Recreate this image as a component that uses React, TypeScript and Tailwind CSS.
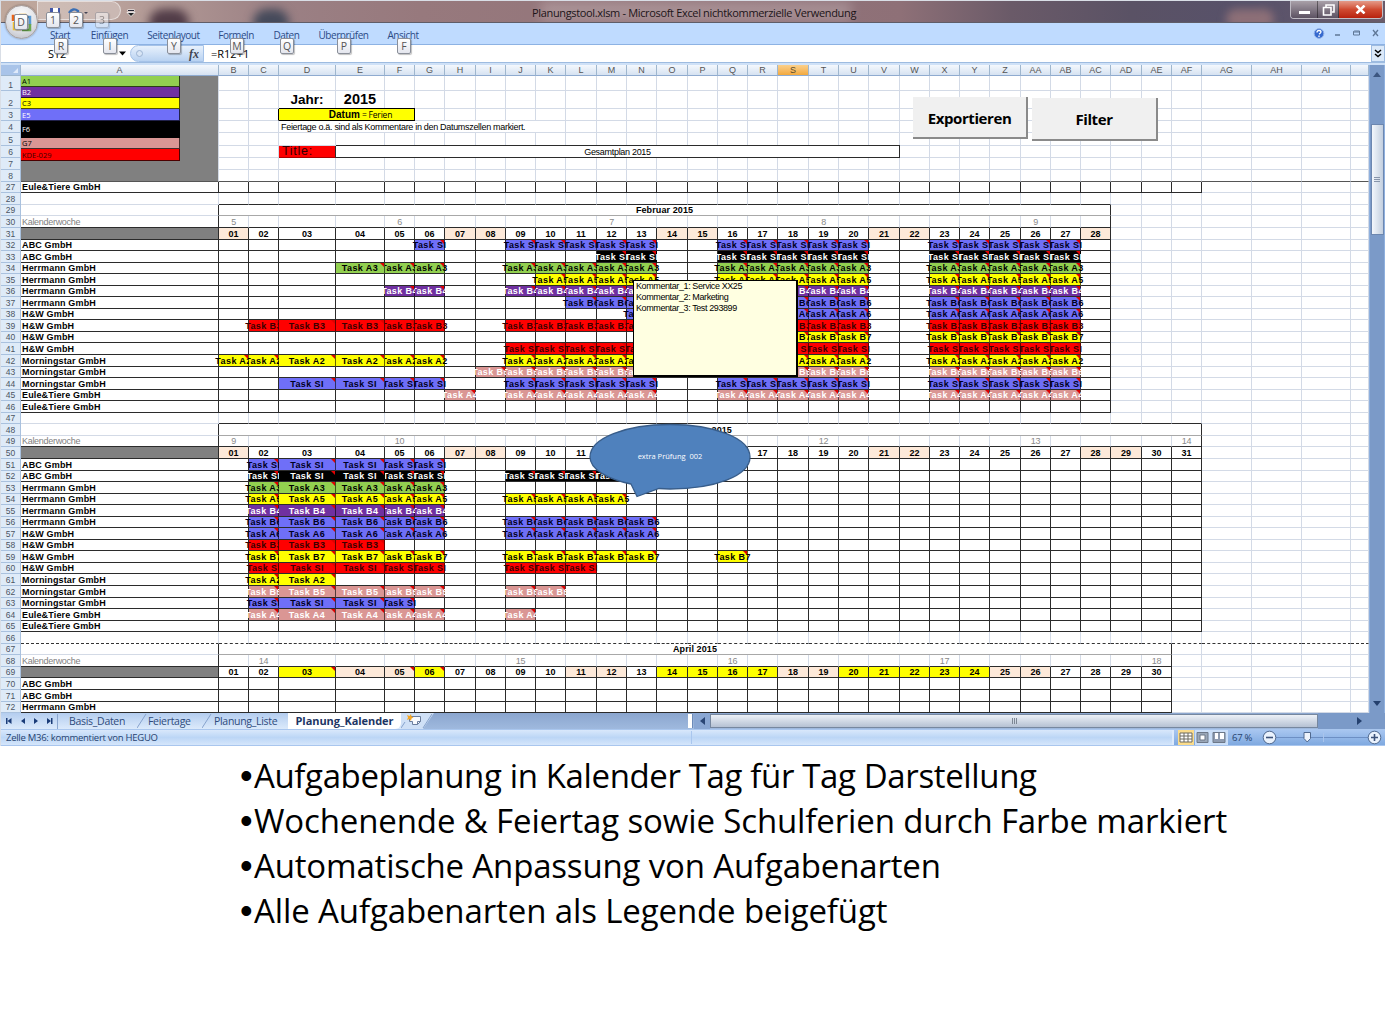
import React from "react";

const COL_LINES = [
  20, 218, 248, 278, 335, 384, 414, 444, 475, 505, 535, 565, 596, 626, 656, 687, 717, 747, 777, 808, 838, 868, 899,
  929, 959, 989, 1020, 1050, 1080, 1110, 1141, 1171, 1201, 1251, 1301, 1350, 1368,
];
const COL_NAMES = [
  "A", "B", "C", "D", "E", "F", "G", "H", "I", "J", "K", "L", "M", "N", "O", "P", "Q", "R", "S", "T", "U", "V", "W",
  "X", "Y", "Z", "AA", "AB", "AC", "AD", "AE", "AF", "AG", "AH", "AI", "",
];
const LAST = 35;
const width = (from: number, to: number = from) => COL_LINES[to + 1] - COL_LINES[from];
const TOP_LINES = [75, 90, 108, 120, 132, 145, 157, 169, 181];
const lineOf = (n: number) => Math.floor(181.25 + (n - 26) * 11.55);
const rowHeight = (n: number) => (n <= 8 ? TOP_LINES[n] - TOP_LINES[n - 1] : lineOf(n) - lineOf(n - 1));
const range = (a: number, b: number) => Array.from({ length: b - a + 1 }, (_, i) => a + i);

type Kind = "blue" | "black" | "green" | "yellow" | "purple" | "red" | "pink";
const FILL: Record<Kind, string> = {
  blue: "bg-[#6f6ff8] text-[#000022]",
  black: "bg-black text-white",
  green: "bg-[#92d050] text-black",
  yellow: "bg-[#ffff00] text-black",
  purple: "bg-[#7030a0] text-white",
  red: "bg-[#ff0000] text-[#3a0000]",
  pink: "bg-[#da9694] text-white",
};

type Task = [string, Kind, number[]];
const L: number[] = [...range(16, 20), ...range(23, 27)];
const W2 = range(9, 13);

type Month = {
  first: number;
  title: string;
  days: number;
  rows: number;
  weeks: Record<number, string>;
  weekend: number[];
  holiday: number[];
  notes: number[];
  tasks: (Task | null)[];
};

const NAMES = [
  "ABC GmbH", "ABC GmbH", "Herrmann GmbH", "Herrmann GmbH", "Herrmann GmbH", "Herrmann GmbH", "H&W GmbH", "H&W GmbH",
  "H&W GmbH", "H&W GmbH", "Morningstar GmbH", "Morningstar GmbH", "Morningstar GmbH", "Eule&Tiere GmbH",
  "Eule&Tiere GmbH",
];

const MONTHS: Month[] = [
  {
    first: 29, title: "Februar 2015", days: 28, rows: 15,
    weeks: { 1: "5", 5: "6", 12: "7", 19: "8", 26: "9" },
    weekend: [1, 7, 8, 14, 15, 21, 22, 28], holiday: [], notes: [],
    tasks: [
      ["Task SI", "blue", [6, ...W2, ...L]],
      ["Task SI", "black", [12, 13, ...L]],
      ["Task A3", "green", [4, 5, 6, ...W2, ...L]],
      ["Task A5", "yellow", [10, 11, 12, 13, ...L]],
      ["Task B4", "purple", [5, 6, ...W2, ...L]],
      ["Task B6", "blue", [11, 12, 13, ...L]],
      ["Task A6", "blue", [13, ...L]],
      ["Task B3", "red", [...range(2, 6), ...W2, ...L]],
      ["Task B7", "yellow", L],
      ["Task SI", "red", [...W2, ...L]],
      ["Task A2", "yellow", [...range(1, 6), ...W2, ...L]],
      ["Task B5", "pink", [8, ...W2, ...L]],
      ["Task SI", "blue", [...range(3, 6), ...W2, ...L]],
      ["Task A4", "pink", [7, ...W2, ...L]],
      null,
    ],
  },
  {
    first: 48, title: "März 2015", days: 31, rows: 15,
    weeks: { 1: "9", 5: "10", 12: "11", 19: "12", 26: "13", 31: "14" },
    weekend: [1, 7, 8, 14, 15, 21, 22, 28, 29], holiday: [], notes: [],
    tasks: [
      ["Task SI", "blue", range(2, 6)],
      ["Task SI", "black", [...range(2, 6), ...range(9, 12)]],
      ["Task A3", "green", range(2, 6)],
      ["Task A5", "yellow", [...range(2, 6), ...range(9, 12)]],
      ["Task B4", "purple", range(2, 6)],
      ["Task B6", "blue", [...range(2, 6), ...W2]],
      ["Task A6", "blue", [...range(2, 6), ...W2]],
      ["Task B3", "red", range(2, 4)],
      ["Task B7", "yellow", [...range(2, 6), ...W2, 16]],
      ["Task SI", "red", [...range(2, 6), 9, 10, 11]],
      ["Task A2", "yellow", [2, 3]],
      ["Task B5", "pink", [...range(2, 6), 9, 10]],
      ["Task SI", "blue", range(2, 5)],
      ["Task A4", "pink", [...range(2, 6), 9]],
      null,
    ],
  },
  {
    first: 67, title: "April 2015", days: 30, rows: 3,
    weeks: { 2: "14", 9: "15", 16: "16", 23: "17", 30: "18" },
    weekend: [4, 5, 11, 12, 18, 19, 25, 26],
    holiday: [3, 6, ...range(14, 17), ...range(20, 24)],
    notes: [3, 5, 6],
    tasks: [null, null, null],
  },
];

const GRID = "border-[#d3dae6]";
const DARK_R = "border-r-[#2b2b2b]";

function Cell({ w, className = "", children }: { w: number; className?: string; children?: React.ReactNode }) {
  return (
    <div
      className={"relative flex shrink-0 items-center justify-center border-r border-b whitespace-nowrap " + className}
      style={{ width: w }}
    >
      {children}
    </div>
  );
}

function Note() {
  return (
    <span className="absolute top-0 right-0 border-t-[4px] border-l-[4px] border-t-[#e00000] border-l-transparent" />
  );
}

function RowShell({ n, children }: { n: number; children: React.ReactNode }) {
  return (
    <div className="flex" style={{ height: rowHeight(n) }}>
      <RowNumber n={n} />
      {children}
    </div>
  );
}

function RowNumber({ n }: { n: number }) {
  return (
    <div className="flex w-5 shrink-0 items-end justify-center border-r border-b border-[#a9c1de] bg-[#dfebf8] text-[8.5px] leading-[10px] text-[#4b5563]">
      {n}
    </div>
  );
}

function Rest({ from }: { from: number }) {
  return (
    <>
      {range(from, LAST).map((c) => (
        <Cell key={c} w={width(c)} className={GRID + " bg-white"} />
      ))}
    </>
  );
}

function BlankRow({ n, end, bottom }: { n: number; end: number; bottom: string }) {
  return (
    <RowShell n={n}>
      {range(0, LAST).map((c) => {
        const dashed = bottom === "dashed";
        const dark = bottom === "dark" && c > 0 && c <= end;
        return (
          <Cell
            key={c}
            w={width(c)}
            className={
              dashed
                ? "border-r-[#d3dae6] border-b-[#333] [border-bottom-style:dashed]"
                : dark
                  ? "border-r-[#d3dae6] border-b-[#2b2b2b]"
                  : GRID
            }
          />
        );
      })}
    </RowShell>
  );
}

function MonthBlock({ m }: { m: Month }) {
  return (
    <>
      <RowShell n={m.first}>
        <Cell w={width(0)} className={DARK_R + " border-b-[#d3dae6]"} />
        <Cell
          w={width(1, m.days)}
          className={DARK_R + " border-b-[#a8a8a8] text-[9px] leading-[10px] font-bold tracking-[0.1px]"}
        >
          {m.title}
        </Cell>
        <Rest from={m.days + 1} />
      </RowShell>
      <RowShell n={m.first + 1}>
        <Cell
          w={width(0)}
          className="justify-start! border-r-[#2b2b2b] border-b-[#2b2b2b] pl-px text-[9px] leading-[10px] tracking-[-0.3px] text-[#808080]"
        >
          Kalenderwoche
        </Cell>
        {range(1, m.days).map((d) => (
          <Cell
            key={d}
            w={width(d)}
            className={
              (d === m.days ? DARK_R : "border-r-[#d3dae6]") +
              " border-b-[#2b2b2b] text-[9px] leading-[10px] tracking-[-0.3px] text-[#8a8a8a]"
            }
          >
            {m.weeks[d]}
          </Cell>
        ))}
        <Rest from={m.days + 1} />
      </RowShell>
      <RowShell n={m.first + 2}>
        <Cell w={width(0)} className="border-[#2b2b2b] bg-[#808080]" />
        {range(1, m.days).map((d) => (
          <Cell
            key={d}
            w={width(d)}
            className={
              "border-[#2b2b2b] text-[9px] leading-[10px] font-bold " +
              (m.weekend.includes(d) ? "bg-[#fde9d9]" : m.holiday.includes(d) ? "bg-[#ffff00]" : "bg-white")
            }
          >
            {String(d).padStart(2, "0")}
            {m.notes.includes(d) && <Note />}
          </Cell>
        ))}
        <Rest from={m.days + 1} />
      </RowShell>
      {range(0, m.rows - 1).map((i) => {
        const task = m.tasks[i];
        return (
          <RowShell key={i} n={m.first + 3 + i}>
            <Cell
              w={width(0)}
              className="justify-start! border-[#2b2b2b] pl-px text-[9px] leading-[10px] font-bold tracking-[0.15px]"
            >
              {NAMES[i]}
            </Cell>
            {range(1, m.days).map((d) => {
              if (!task || !task[2].includes(d)) return <Cell key={d} w={width(d)} className="border-[#2b2b2b]" />;
              const openL = !task[2].includes(d - 1);
              const openR = !task[2].includes(d + 1);
              const clip = openL
                ? openR
                  ? "[clip-path:inset(0_-6px)]"
                  : "[clip-path:inset(0_0_0_-6px)]"
                : openR
                  ? "[clip-path:inset(0_-6px_0_0)]"
                  : "[clip-path:inset(0)]";
              return (
                <Cell
                  key={d}
                  w={width(d)}
                  className={
                    "z-1 border-r-black/60 border-b-[#2b2b2b] text-[9px] leading-[10px] font-bold tracking-[0.4px] " +
                    clip + " " + FILL[task[1]]
                  }
                >
                  {task[0]}
                  <Note />
                </Cell>
              );
            })}
            <Rest from={m.days + 1} />
          </RowShell>
        );
      })}
    </>
  );
}

const LEGEND: [string, string][] = [
  ["A1", "h-[11px] bg-[#92d050] text-black"],
  ["B2", "h-[11px] bg-[#7030a0] text-white"],
  ["C3", "h-[11px] bg-[#ffff00] text-black"],
  ["E5", "h-[12px] bg-[#6f6ff8] text-white"],
  ["F6", "h-[17px] bg-black text-white"],
  ["G7", "h-[11px] bg-[#da9694] text-black"],
  ["KDE-029", "h-[12px] bg-[#ff0000] text-[#400000]"],
];

function TopPane() {
  return (
    <div className="flex">
      <div className="flex flex-col">
        {range(1, 8).map((n) => (
          <div key={n} className="flex" style={{ height: rowHeight(n) }}>
            <RowNumber n={n} />
          </div>
        ))}
      </div>
      <div className="h-[106px] w-[198px] border-r border-b border-r-[#d3dae6] border-b-[#555] bg-[#808080]">
        {LEGEND.map(([t, c]) => (
          <div
            key={t}
            className={
              "flex w-[159px] items-center border-r border-b border-black/70 pl-[1px] font-['Open_Sans'] text-[7.5px] leading-[8px] " + c
            }
          >
            {t}
          </div>
        ))}
      </div>
      <div className="flex flex-col">
        <TopRow n={1} />
        <TopRow
          n={2}
          content={{
            3: <b className="text-[13.5px] leading-none">Jahr:</b>,
            4: <b className="text-[14.5px] leading-none">2015</b>,
          }}
        />
        <div className="flex" style={{ height: rowHeight(3) }}>
          {range(1, 2).map((c) => (
            <Cell key={c} w={width(c)} className={c === 2 ? "border-r-black border-b-[#d3dae6]" : GRID} />
          ))}
          <Cell w={width(3, 5)} className="border-black bg-[#ffff00] pl-7 text-[10px] leading-[10px] shadow-[0_-1px_0_#000]">
            <b>Datum</b>
            <span className="pl-[2px] font-['Open_Sans'] text-[8.5px] tracking-[-0.2px]">= Ferien</span>
          </Cell>
          <Rest from={6} />
        </div>
        <div className="flex" style={{ height: rowHeight(4) }}>
          {range(1, 2).map((c) => (
            <Cell key={c} w={width(c)} className={GRID} />
          ))}
          <Cell w={width(3, 10)} className="justify-start! border-r-[#d3dae6] border-b-[#d3dae6] pl-0.5 text-[9px] leading-[10px] tracking-[-0.31px]">
            Feiertage o.ä. sind als Kommentare in den Datumszellen markiert.
          </Cell>
          <Rest from={11} />
        </div>
        <TopRow n={5} />
        <div className="flex" style={{ height: rowHeight(6) }}>
          {range(1, 2).map((c) => (
            <Cell key={c} w={width(c)} className={GRID} />
          ))}
          <Cell w={width(3)} className="justify-start! border-r-[#2b2b2b] border-b-[#a00] bg-[#ff0000] pl-[3px] text-[12.5px] leading-none tracking-[0.7px] text-[#300000]">
            Title:
          </Cell>
          <Cell w={width(4, 21)} className="border-[#2b2b2b] text-[9px] leading-[10px] tracking-[-0.3px] shadow-[0_-1px_0_#2b2b2b]">
            Gesamtplan 2015
          </Cell>
          <Rest from={22} />
        </div>
        <TopRow n={7} />
        <TopRow n={8} frozen />
      </div>
    </div>
  );
}

function TopRow({ n, content = {}, frozen = false }: { n: number; content?: Record<number, React.ReactNode>; frozen?: boolean }) {
  return (
    <div className="flex" style={{ height: rowHeight(n) }}>
      {range(1, LAST).map((c) => (
        <Cell key={c} w={width(c)} className={frozen ? "border-r-[#d3dae6] border-b-[#555]" : GRID}>
          {content[c]}
        </Cell>
      ))}
    </div>
  );
}

function KeyTip({ t, className }: { t: string; className: string }) {
  return (
    <span
      className={
        "absolute flex h-[16px] w-[14px] items-center justify-center rounded-[2px] border border-[#8a8f99] bg-gradient-to-b from-white to-[#e4e6ee] font-['Open_Sans'] text-[10.5px] leading-none text-[#555] shadow-[1px_1px_1px_#00000040] " +
        className
      }
    >
      {t}
    </span>
  );
}

function TitleBar() {
  return (
    <div className="relative flex h-[22px] overflow-hidden border-b border-[#5f5d68] bg-[linear-gradient(90deg,#c0a89c_0px,#b8a09a_120px,#9b8084_280px,#97797d_420px,#8e7077_900px,#6a5a68_1010px,#5a5265_1130px,#57516a_1250px,#6a5c6b_1386px)]">
      <span className="absolute top-2 left-[148px] h-7 w-10 rounded-full bg-[#3a2535]/80 blur-[5px]" />
      <span className="absolute top-2 left-[252px] h-7 w-9 rounded-full bg-[#2f3c50]/80 blur-[5px]" />
      <span className="absolute top-2 left-[1225px] h-5 w-12 rounded-full bg-[#b08480]/60 blur-[4px]" />
      <span className="absolute top-0 left-[540px] h-[20px] w-[310px] bg-white/20 blur-[6px]" />
      <span className="absolute top-0 left-[36px] h-[19px] w-[84px] rounded-r-[10px] border border-white/50 bg-white/25" />
      <svg className="absolute top-[6px] left-[48px]" width="90" height="14" viewBox="0 0 90 14">
        <path d="M1 1h10v10H1z" fill="#4156a8" />
        <path d="M4 1h5v4H4z" fill="#fff" />
        <path d="M20 6q4-6 9-2v6" fill="none" stroke="#3a6fb5" strokeWidth="2.4" />
        <path d="M35 5h4l-2 2z" fill="#445" />
        <path d="M78.500 3.500h7" stroke="#fff" strokeWidth="2" />
        <path d="M79 3.500h6" stroke="#223" />
        <path d="M78 5.500h8l-4 4z" fill="#222" stroke="#fff" strokeWidth=".8" />
      </svg>
      <span className="absolute top-[5px] left-[531px] font-['Open_Sans'] text-[11px] leading-[14px] tracking-[-0.34px] whitespace-nowrap text-[#1c1418]">
        Planungstool.xlsm - Microsoft Excel nichtkommerzielle Verwendung
      </span>
      <div className="absolute top-0 right-[2px] flex h-[18px] overflow-hidden rounded-b-[4px] border border-t-0 border-white/60">
        <div className="flex w-[27px] items-end justify-center border-r border-black/40 bg-gradient-to-b from-[#a9a0a8] to-[#5d5363] pb-1">
          <span className="h-[3px] w-[11px] bg-white" />
        </div>
        <div className="flex w-[21px] items-center justify-center border-r border-black/40 bg-gradient-to-b from-[#a9a0a8] to-[#5d5363]">
          <svg width="13" height="12" viewBox="0 0 13 12" fill="none" stroke="#fff" strokeWidth="1.6">
            <path d="M4 3V1h8v7h-2" />
            <path d="M1.500 3.500h7.500v7.500h-7.500z" />
          </svg>
        </div>
        <div className="flex w-[43px] items-center justify-center bg-gradient-to-b from-[#e39a88] via-[#cf4a30] to-[#b8200c]">
          <svg width="11" height="9" viewBox="0 0 11 9" stroke="#fff" strokeWidth="2.500">
            <path d="M1.500 .5l8 8M9.500 .5l-8 8" />
          </svg>
        </div>
      </div>
    </div>
  );
}

function OfficeButton() {
  return (
    <div className="absolute top-[4px] left-[4px] flex h-[34px] w-[33px] items-center justify-center rounded-full border border-[#a79e9c] bg-[radial-gradient(circle_at_50%_30%,#ffffff,#dcdde2_60%,#b5b8c2)] shadow-[0_0_2px_#00000060]">
      <svg width="22" height="22" viewBox="0 0 22 22" fill="none" strokeWidth="2.500">
        <path d="M2 10V5h8" stroke="#e8641b" />
        <path d="M8 4h6v4" stroke="#f2b120" />
        <path d="M3 11v7h7" stroke="#f0c030" />
        <path d="M14 6h5v8" stroke="#5a9bd5" />
        <path d="M11 19h8v-6" stroke="#6aa84f" />
      </svg>
      <KeyTip t="D" className="top-[8px] left-[8px]" />
    </div>
  );
}

const TABS: [string, string][] = [
  ["Start", "w-[20px] ml-[49px]"],
  ["Einfügen", "w-[37px] ml-[21px]"],
  ["Seitenlayout", "w-[51px] ml-[20px]"],
  ["Formeln", "w-[34px] ml-[20px]"],
  ["Daten", "w-[25px] ml-[21px]"],
  ["Überprüfen", "w-[49px] ml-[20px]"],
  ["Ansicht", "w-[30px] ml-[20px]"],
];

function Ribbon() {
  return (
    <div className="flex h-[22px] items-start border-b border-[#8db2e3] bg-[#bfdbff] pt-[5px] font-['Open_Sans'] text-[10px] leading-[14px] tracking-[-0.45px] text-[#2b4a86]">
      {TABS.map(([t, c]) => (
        <span key={t} className={"flex shrink-0 justify-center whitespace-nowrap " + c}>
          {t}
        </span>
      ))}
      <svg className="mr-[5px] ml-auto" width="68" height="12" viewBox="0 0 68 12">
        <circle cx="7" cy="5.500" r="4.800" fill="#3569cf" stroke="#8fb0e6" />
        <path d="M5 4.500q0-2 2-2t2 1.600q0 1-2 2M7 7.500v1.500" stroke="#fff" strokeWidth="1.300" fill="none" />
        <path d="M23 7h5" stroke="#5f7796" strokeWidth="1.500" />
        <path d="M42.500 3h5v4h-6v-3.500z M41.500 4h6" stroke="#5f7796" fill="none" />
        <path d="M61 2l5 6M66 2l-5 6" stroke="#5f7796" strokeWidth="1.300" />
      </svg>
    </div>
  );
}

function FormulaBar() {
  return (
    <div className="flex h-[18px] items-center border-b border-[#9dbbe0] bg-white font-['Open_Sans'] text-[11px] leading-[14px] text-black">
      <div className="flex w-[129px] items-center justify-between pr-[4px] pl-[47px]">
        <span className="tracking-[-0.2px]">S12</span>
        <svg width="7" height="5" viewBox="0 0 7 5">
          <path d="M0 .5h7l-3.500 4z" />
        </svg>
      </div>
      <div className="flex h-[17px] w-[74px] items-center justify-between rounded-l-full border border-[#a5c2e8] bg-gradient-to-b from-[#e8f1fc] to-[#b9d2f1] pr-1 pl-[5px]">
        <span className="h-[7px] w-[7px] rounded-full border border-[#9db4d3] bg-[#d8e5f5]" />
        <span className="font-['Liberation_Serif'] text-[12px] font-bold text-[#3f4450] italic">fx</span>
      </div>
      <span className="pl-[7px]">=R12+1</span>
      <div className="ml-auto flex h-[17px] w-[14px] items-center justify-center border border-[#9dbbe0] bg-[#dbe9f9]">
        <svg width="8" height="9" viewBox="0 0 8 9" fill="none" stroke="#000" strokeWidth="1.500">
          <path d="M1 1l3 2.500 3-2.500M1 5l3 2.500 3-2.500" />
        </svg>
      </div>
    </div>
  );
}

function ColumnHeader() {
  return (
    <div className="flex h-[11px] shrink-0 bg-gradient-to-b from-[#f4f8fd] to-[#d3e0f0]">
      <div className="flex w-5 shrink-0 items-end justify-end border-r border-b border-[#9eb6ce] bg-[#a9c4e9] pr-[2px] pb-[2px]">
        <svg width="5" height="5" viewBox="0 0 5 5">
          <path d="M5 0v5H0z" fill="#dfeafa" />
        </svg>
      </div>
      {COL_NAMES.map((t, c) => (
        <div
          key={c}
          className={
            "flex shrink-0 items-center justify-center border-r border-b border-r-[#9eb6ce] border-b-[#8fabd0] text-[9px] leading-none " +
            (t === "S" ? "bg-gradient-to-b from-[#fbd08a] to-[#f2a93b] text-[#5a4a2a]" : "text-[#555]")
          }
          style={{ width: width(c) }}
        >
          {t}
        </div>
      ))}
    </div>
  );
}

function VerticalScroll() {
  return (
    <div className="flex w-[16px] flex-col items-center border-x border-[#8fb0de] bg-[#7b9ac8] py-[7px]">
      <svg width="8" height="5" viewBox="0 0 8 5">
        <path d="M0 5h8L4 0z" fill="#3c5680" />
      </svg>
      <div className="mt-[47px] flex h-[111px] w-[13px] flex-col items-center justify-center gap-px border border-[#6c87b0] bg-gradient-to-r from-[#f3f7fc] to-[#c3cfdf]">
        <span className="h-px w-[6px] bg-[#8795ab]" />
        <span className="h-px w-[6px] bg-[#8795ab]" />
        <span className="h-px w-[6px] bg-[#8795ab]" />
      </div>
      <svg className="mt-auto" width="8" height="5" viewBox="0 0 8 5">
        <path d="M0 0h8L4 5z" fill="#24406e" />
      </svg>
    </div>
  );
}

function SheetTabs() {
  return (
    <div className="flex h-4 bg-gradient-to-b from-[#8ba6cf] to-[#9fb9de] font-['Open_Sans'] text-[10.5px] leading-[14px] tracking-[-0.3px] text-[#2f4b7c]">
      <div className="flex w-[400px] items-center bg-gradient-to-b from-[#b4cdef] to-[#dceafb]">
        <svg width="57" height="15" viewBox="0 0 57 15" fill="#1b3c78">
          <path d="M5 4h1.500v6H5zM10.500 4v6l-4-3zM24 4v6l-4-3zM33 4v6l4-3zM46 4v6l4-3zM50 4h1.500v6H50z" />
          <path d="M56.500 0v15" stroke="#8aa6cf" />
        </svg>
        <span className="w-[79px] pl-[11px]">Basis_Daten</span>
        <svg width="10" height="16" viewBox="0 0 10 16"><path d="M0 15L9 1" stroke="#87a3cd" /></svg>
        <span className="w-[55px] pl-px">Feiertage</span>
        <svg width="10" height="16" viewBox="0 0 10 16"><path d="M0 15L9 1" stroke="#87a3cd" /></svg>
        <span className="w-[76px] pl-[2px]">Planung_Liste</span>
        <span className="flex h-4 w-[113px] items-center justify-center rounded-br-[6px] bg-white text-[11px] font-bold tracking-[-0.05px] text-[#1d3564]">
          Planung_Kalender
        </span>
      </div>
      <svg width="36" height="16" viewBox="0 0 36 16">
        <path d="M0 16V0H33L22 16z" fill="#cfe0f6" />
        <path d="M0 15L4 9M22 15L31 1" stroke="#87a3cd" fill="none" />
        <path d="M8.500 3.500h11v5l-3 3h-5v-3h-3z" fill="#f8fafd" stroke="#6c7f9e" />
        <path d="M16.500 11.500v-3h3" fill="none" stroke="#6c7f9e" />
        <path d="M6 2l2.500 1L10 1l.5 2.500 2 1-2 1-.5 2.500-1.500-2-2.500 1 1-2.500z" fill="#f5a623" />
      </svg>
      <div className="ml-auto flex w-[697px]">
        <span className="my-px mr-px w-[5px] border-r border-[#6d8bb9] bg-white" />
        <span className="flex w-[16px] items-center justify-center bg-[#8aa7d3]">
          <svg width="5" height="8" viewBox="0 0 5 8"><path d="M5 0v8L0 4z" fill="#2a4675" /></svg>
        </span>
        <div className="my-px flex w-[608px] items-center justify-center gap-px border border-[#76879f] bg-gradient-to-b from-[#edf1f7] to-[#b5c1d3]">
          <span className="h-[6px] w-px bg-[#7d8794]" />
          <span className="h-[6px] w-px bg-[#7d8794]" />
          <span className="h-[6px] w-px bg-[#7d8794]" />
        </div>
        <div className="flex flex-1 items-center bg-[#7b9ac8] pl-[39px]">
          <svg width="5" height="8" viewBox="0 0 5 8"><path d="M0 0v8l5-4z" fill="#24406e" /></svg>
        </div>
      </div>
    </div>
  );
}

function StatusBar() {
  return (
    <div className="flex h-[17px] items-center border-y border-[#a9c6ee] bg-gradient-to-b from-[#d9e8fb] via-[#bcd6f6] to-[#d5e6fb] font-['Open_Sans'] text-[9.5px] leading-[13px] tracking-[-0.27px] text-[#26426f]">
      <span className="w-[691px] border-r border-[#a9c6ee] pl-[5px]">Zelle M36: kommentiert von HEGUO</span>
      <div className="ml-auto flex h-full w-[213px] items-center border-l-2 border-[#dceafc] bg-gradient-to-b from-[#a8c6f0] to-[#7fa9e0] pl-[4px]">
        <svg width="50" height="15" viewBox="0 0 50 15">
          <path d="M0 0h16v15H0z" fill="#fbdc8b" />
          <path d="M2 3h12v9H2zM2 6h12M2 9h12M6 3v9M10 3v9" fill="#fff" stroke="#6c6a60" />
          <path d="M17 0h33v15H17z" fill="#cbdff8" />
          <path d="M19 2.500h11v10H19z" fill="#9aa7b8" stroke="#6d7888" />
          <path d="M22 5h5v5h-5z" fill="#fff" stroke="#6d7888" />
          <path d="M35 2.500h12v10H35z" fill="#8e9bb0" stroke="#6d7888" />
          <path d="M37 3h3v6h-3zM42 3h4v6h-4z" fill="#fff" />
        </svg>
        <span className="w-[34px] pl-[4px] whitespace-nowrap">67 %</span>
        <svg width="120" height="15" viewBox="0 0 120 15">
          <path d="M14 7.500h92" stroke="#6d8fc4" />
          <path d="M61.500 3v9" stroke="#a9c4ec" />
          <circle cx="7.500" cy="7.500" r="6.300" fill="#eaf2fd" stroke="#50698f" />
          <path d="M4 7.500h7" stroke="#3c527a" strokeWidth="1.600" />
          <path d="M42 2.500h6.500v6l-3.300 3.500-3.200-3.500z" fill="#eef3fb" stroke="#50698f" />
          <circle cx="112.500" cy="7.500" r="6.300" fill="#eaf2fd" stroke="#50698f" />
          <path d="M109 7.500h7M112.500 4v7" stroke="#3c527a" strokeWidth="1.600" />
        </svg>
      </div>
    </div>
  );
}

function ExcelWindow() {
  return (
    <div className="relative flex h-[746px] w-[1385px] flex-col overflow-hidden border-t border-l border-[#d9dee6]">
      <TitleBar />
      <Ribbon />
      <FormulaBar />
      <div className="h-[2px] shrink-0 bg-[#cfe1f7]" />
      <div className="flex h-[648px] shrink-0">
        <div className="flex h-[648px] w-[1368px] shrink-0 flex-col overflow-hidden bg-white">
          <ColumnHeader />
          <TopPane />
          <RowShell n={27}>
            <Cell w={width(0)} className="justify-start! border-[#2b2b2b] pl-px text-[9px] leading-[10px] font-bold tracking-[0.15px]">
              Eule&amp;Tiere GmbH
            </Cell>
            {range(1, 31).map((c) => (
              <Cell key={c} w={width(c)} className="border-[#2b2b2b]" />
            ))}
            <Rest from={32} />
          </RowShell>
          <BlankRow n={28} end={28} bottom="dark" />
          <MonthBlock m={MONTHS[0]} />
          <BlankRow n={47} end={31} bottom="dark" />
          <MonthBlock m={MONTHS[1]} />
          <BlankRow n={66} end={31} bottom="dashed" />
          <MonthBlock m={MONTHS[2]} />
        </div>
        <VerticalScroll />
      </div>
      <SheetTabs />
      <StatusBar />

      <OfficeButton />
      <KeyTip t="1" className="top-[11px] left-[45px]" />
      <KeyTip t="2" className="top-[11px] left-[68px]" />
      <KeyTip t="3" className="top-[11px] left-[94px] opacity-50" />
      <KeyTip t="R" className="top-[37px] left-[53px]" />
      <KeyTip t="I" className="top-[37px] left-[102px]" />
      <KeyTip t="Y" className="top-[37px] left-[166px]" />
      <KeyTip t="M" className="top-[37px] left-[229px]" />
      <KeyTip t="Q" className="top-[37px] left-[279px]" />
      <KeyTip t="P" className="top-[37px] left-[336px]" />
      <KeyTip t="F" className="top-[37px] left-[396px]" />

      <button className="absolute top-[96px] left-[912px] h-[42px] w-[115px] border-r-2 border-b-2 border-[#8a8a8a] bg-[#f0f0f0] pt-[3px] font-['Open_Sans'] text-[15px] font-bold tracking-[-0.4px]">
        Exportieren
      </button>
      <button className="absolute top-[97px] left-[1031px] h-[43px] w-[126px] border-r-2 border-b-2 border-[#8a8a8a] bg-[#f0f0f0] pt-[2px] font-['Open_Sans'] text-[15px] font-bold tracking-[-0.4px]">
        Filter
      </button>

      <div className="absolute top-[279px] left-[632px] z-2 h-[97px] w-[165px] border border-r-2 border-b-2 border-black bg-[#ffffe1] pl-[2px] text-[9px] leading-[11px] tracking-[-0.4px]">
        <p>Kommentar_1: Service XX25</p>
        <p>Kommentar_2: Marketing</p>
        <p>Kommentar_3: Test 293899</p>
      </div>

      <div className="absolute top-[422px] left-[588px] z-2 h-[76px] w-[162px]">
        <svg width="162" height="76" viewBox="0 0 162 76">
          <path
            d="M42 61C18 56 1 46 1 34C1 15 37 1.500 81 1.500S161 15 161 34S125 66 81 66L70 65.500L48 73.500Z"
            fill="#4f81bd"
            stroke="#385d8a"
            strokeWidth="1.300"
          />
        </svg>
        <span className="absolute top-[27px] left-0 w-full text-center font-['Open_Sans'] text-[7.5px] leading-[12px] text-white">
          extra Prüfung&nbsp; 002
        </span>
      </div>
    </div>
  );
}

const BULLETS: [string, string][] = [
  ["Aufgabeplanung in Kalender Tag für Tag Darstellung", "tracking-[-0.37px]"],
  ["Wochenende & Feiertag sowie Schulferien durch Farbe markiert", "tracking-[-0.13px]"],
  ["Automatische Anpassung von Aufgabenarten", "tracking-[-0.17px]"],
  ["Alle Aufgabenarten als Legende beigefügt", "tracking-[-0.12px]"],
];

export default function App() {
  return (
    <div className="h-[1014px] w-[1386px] overflow-hidden bg-white font-['Liberation_Sans',sans-serif] text-black">
      <ExcelWindow />
      <ul className="pt-[7px] pl-[240px] font-['Open_Sans',sans-serif] text-[33px] leading-[45px]">
        {BULLETS.map(([t, c]) => (
          <li key={t} className={"flex whitespace-nowrap [font-stretch:90%] " + c}>
            <span className="w-[14px] font-['Liberation_Sans'] text-[36px]">•</span>
            <span>{t}</span>
          </li>
        ))}
      </ul>
    </div>
  );
}
